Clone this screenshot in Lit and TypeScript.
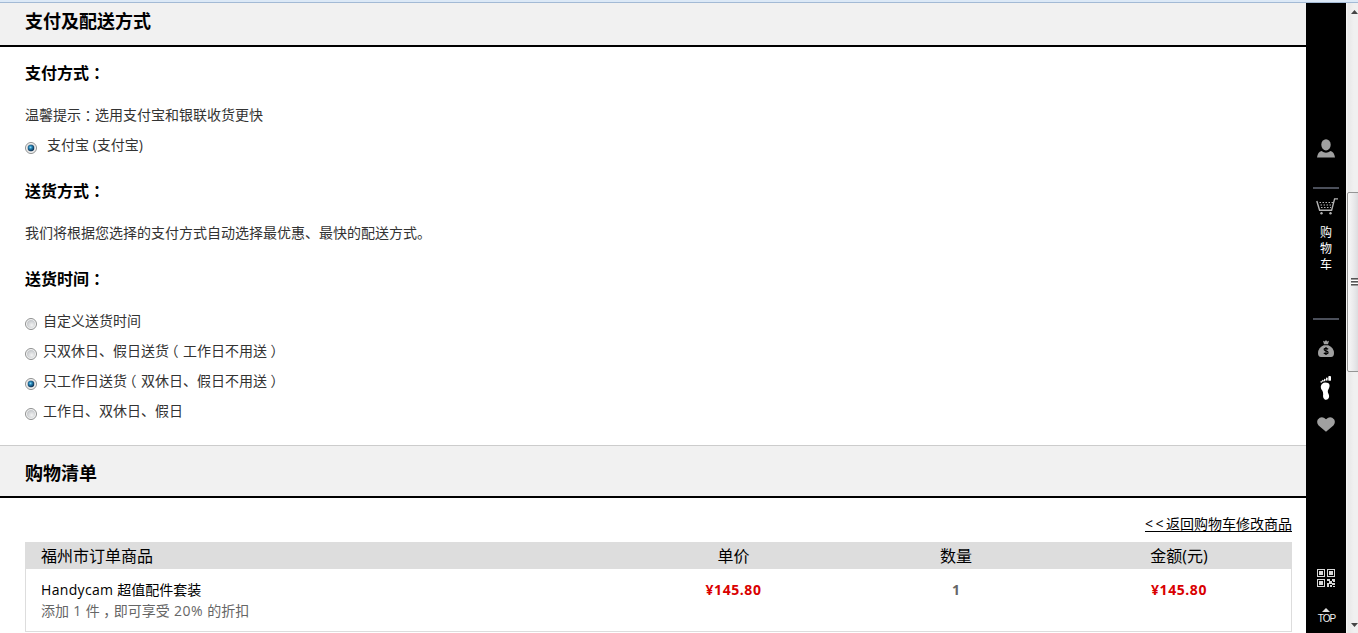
import { LitElement, html, css, svg } from "lit";
import { customElement, property } from "lit/decorators.js";
import { classMap } from "lit/directives/class-map.js";

@customElement("radio-row")
class RadioRow extends LitElement {
  @property() label = "";
  @property({ type: Boolean }) checked = false;
  @property({ type: Boolean }) wide = false;

  static styles = css`
    :host { display: block; }
    .row { display: flex; height: 30px; line-height: 30px; color: #333; font-size: 14px; white-space: nowrap; }
    .dot { width: 12px; height: 12px; margin: 12px 6px 0 0; flex: none; }
    .wide .dot { margin-right: 10px; }
    .paren { display: inline-block; width: 14px; text-align: center; font-feature-settings: "halt"; }
    .open { text-indent: -2px; }
  `;

  render() {
    const parts = this.label.split(/([（）])/);
    return html`<div class=${classMap({ row: true, wide: this.wide })}>
      <svg class="dot" viewBox="0 0 12 12">
        <defs>
          <radialGradient id="g" cx="60%" cy="65%" r="60%">
            <stop offset="0" stop-color="#f3f3f3" /><stop offset="1" stop-color="#c6c9cc" />
          </radialGradient>
          <radialGradient id="b" cx="42%" cy="40%" r="60%">
            <stop offset="0" stop-color="#8fdcf8" /><stop offset=".4" stop-color="#2583b5" /><stop offset="1" stop-color="#0b2b4c" />
          </radialGradient>
        </defs>
        <circle cx="6" cy="6" r="5.5" fill="#f6f6f6" stroke="#8e8f8f" />
        <circle cx="6" cy="6" r="4" fill="url(#g)" />
        ${this.checked ? svg`<circle cx="6" cy="6" r="3.2" fill="url(#b)" />` : ""}
      </svg>
      <span>${parts.map((p) => (p === "（" || p === "）" ? html`<span class=${classMap({ paren: true, open: p === "（" })}>${p}</span>` : p))}</span>
    </div>`;
  }
}

@customElement("side-bar")
class SideBar extends LitElement {
  static styles = css`
    :host { display: flex; flex-direction: column; align-items: center; width: 40px; background: #000; }
    svg { display: block; flex: none; }
    .user { margin-top: 136px; }
    .rule { width: 26px; height: 2px; background: #4b4f5a; }
    .r1 { margin-top: 29px; }
    .cart { margin: 9px 0 0 1px; }
    .label { width: 12px; margin-top: 10px; font-size: 12px; line-height: 16px; color: #fff; word-break: break-all; }
    .r2 { margin-top: 45px; }
    .bag { margin-top: 20px; }
    .foot { margin-top: 19px; }
    .heart { margin-top: 17px; }
    .qr { margin-top: 137px; }
    .arrow { margin-top: 21px; }
    .top { font: 10px/10px "Liberation Sans", sans-serif; color: #f0f0f0; margin: 2px 0 0 1px; letter-spacing: -.9px; }
  `;

  render() {
    return html`
      <svg class="user" width="18" height="19" viewBox="0 0 18 19" fill="#a0a0a0">
        <ellipse cx="9" cy="5.8" rx="4.7" ry="5.6" />
        <path d="M0 18.500 Q.8 12.800 4.500 12 Q9 15.500 13.500 12 Q17.200 12.800 18 18.500Z" />
      </svg>
      <div class="rule r1"></div>
      <svg class="cart" width="22" height="17" viewBox="0 0 22 17" fill="none" stroke="#b4b4b4" stroke-width="1.4">
        <path d="M22 .9H18.600L15.600 12.200H3.600L.8 3" />
        <path d="M3.500 4.500H17M4.500 7H16.500M5 9.500H15" stroke-dasharray="1.500 1.500" stroke-width="1" />
        <circle cx="5.500" cy="15.300" r="1.200" fill="#b4b4b4" stroke="none" />
        <circle cx="14.500" cy="15.300" r="1.200" fill="#b4b4b4" stroke="none" />
      </svg>
      <div class="label">购物车</div>
      <div class="rule r2"></div>
      <svg class="bag" width="16" height="17" viewBox="0 0 16 17">
        <path d="M5 .8L6.800 1.500 8 0 9.200 1.500 11 .8 10 4.200H6Z" fill="#a0a0a0" />
        <path d="M5.600 5.200H10.400Q16 8 16 13Q16 17 13 17H3Q0 17 0 13Q0 8 5.600 5.200Z" fill="#a0a0a0" />
        <path d="M10.200 9.200Q8 7.600 6.300 8.800Q5.800 10.600 8 11Q10.500 11.400 9.900 13.200Q8 14.600 5.800 13M8 7V15" fill="none" stroke="#000" stroke-width="1.200" />
      </svg>
      <svg class="foot" width="12" height="24" viewBox="0 0 12 24" fill="#fff">
        <path d="M.8 10.500Q1.500 6.800 5.300 6.500Q9.800 6.500 9.600 10Q9.200 12.500 8 14.300Q7.400 15.800 8.600 18Q9.600 20.500 8.600 22.300Q7 24.200 5 23.700Q3 23 3 20Q3.500 17 2.400 14.800Q.6 12.500 .8 10.500Z" />
        <rect x="8.300" y="0" width="2.700" height="4.800" rx=".9" />
        <rect x="6" y="1.500" width="1.600" height="3.300" rx=".7" />
        <rect x="4" y="2.700" width="1.400" height="2.600" rx=".6" />
        <rect x="2.200" y="3.700" width="1.300" height="2.200" rx=".6" />
        <rect x=".6" y="4.800" width="1.200" height="2" rx=".6" />
      </svg>
      <svg class="heart" width="18" height="15" viewBox="0 0 18 15" fill="#a0a0a0">
        <path d="M9 14.800L1.600 8.500Q-.8 5.500 .8 2.500Q4.500-2 9 2.200Q13.500-2 17.200 2.500Q18.800 5.500 16.400 8.500Z" />
      </svg>
      <svg class="qr" width="18" height="18" viewBox="0 0 18 18" fill="#d8d8d8" shape-rendering="crispEdges">
        <path fill-rule="evenodd" d="M0 0H8V8H0ZM1 1V7H7V1ZM10 0H18V8H10ZM11 1V7H17V1ZM0 10H8V18H0ZM1 11V17H7V11Z" />
        <path d="M2 2H6V6H2ZM12 2H16V6H12ZM2 12H6V16H2ZM10 10H13V12H10ZM15 10H18V13H16V12H15ZM12 12H15V15H12ZM10 14H12V18H10ZM15 14H18V16H15ZM13 16H15V18H13ZM16 17H18V18H16Z" />
      </svg>
      <svg class="arrow" width="8" height="4" viewBox="0 0 8 4" fill="#e0e0e0"><path d="M4 0L8 4H0Z" /></svg>
      <div class="top">TOP</div>
    `;
  }
}

@customElement("scroll-bar")
class ScrollBar extends LitElement {
  static styles = css`
    :host { display: flex; flex-direction: column; width: 12px; overflow: hidden; background: linear-gradient(90deg, #f8f8f8 0, #e8e8e8 2px, #f0f0f0 8px); }
    svg { display: block; flex: none; margin-left: 5px; }
    .up { margin-top: 7px; }
    .thumb { box-sizing: border-box; width: 16px; height: 180px; flex: none; margin: 178px 0 0 1px; border: 1px solid #959595; border-radius: 2px; background: linear-gradient(90deg, #f7f7f7, #e6e6e8 50%, #cfcfd2); padding: 85px 0 0 3px; }
    .grip { width: 9px; height: 8px; background: repeating-linear-gradient(#555 0 1px, #999 1px 2px, #fff 2px 3px); }
    .down { margin-top: 251px; }
  `;

  render() {
    return html`
      <svg class="up" width="7" height="4" viewBox="0 0 7 4"><path d="M0 4L3.500 0 7 4Z" fill="#444" /></svg>
      <div class="thumb"><div class="grip"></div></div>
      <svg class="down" width="7" height="4" viewBox="0 0 7 4"><path d="M0 0L3.500 4 7 0Z" fill="#444" /></svg>
    `;
  }
}

@customElement("app-root")
class AppRoot extends LitElement {
  static styles = css`
    :host { display: flex; flex-direction: column; height: 633px; overflow: hidden; background: #fff; color: #000; font-family: "Open Sans", "Noto Sans CJK SC", sans-serif; font-size: 14px; }
    .edge { flex: none; height: 2px; background: #dce9f7; border-bottom: 1px solid #a3bad5; }
    .body { display: flex; flex: 1; min-height: 0; }
    main { flex: 1; min-width: 0; }
    h2, h3, p { margin: 0; white-space: nowrap; }
    h2 { box-sizing: border-box; padding-left: 25px; font-size: 18px; background: #f1f1f1; border-bottom: 2px solid #000; }
    .first { height: 44px; line-height: 36px; }
    .second { height: 53px; line-height: 54px; border-top: 1px solid #ccc; }
    .form { padding: 0 25px 19px; }
    h3 { height: 24px; font-size: 16px; line-height: 24px; margin: 19px 0 15px; }
    .form h3:first-child { margin-top: 14px; }
    .mid { display: inline-block; width: 1em; text-align: center; font-feature-settings: "halt"; }
    p { height: 30px; line-height: 30px; color: #333; }
    .back { display: flex; justify-content: flex-end; margin: 16px 14px 0 0; height: 28px; line-height: 20px; }
    .back a { color: #000; text-decoration: underline; text-underline-offset: 2px; }
    .lt { letter-spacing: 2.5px; }
    .table { margin: 0 14px 0 25px; box-sizing: border-box; border: 1px solid #ddd; border-top: 0; height: 90px; }
    .tr { display: grid; grid-template-columns: 596px 223px 222px 224px; text-align: center; }
    .th { margin: 0 -1px; padding: 0 1px; background: #ddd; height: 27px; line-height: 28px; font-size: 16px; }
    .name { text-align: left; padding-left: 15px; }
    .td { padding-top: 10px; line-height: 21px; }
    .latin { letter-spacing: .33px; }
    .note { color: #666; }
    .note .latin { letter-spacing: .5px; }
    .price { color: #d90000; font-weight: 700; letter-spacing: .57px; }
    .qty { color: #666; font-weight: 700; }
  `;

  render() {
    const colon = html`<span class="mid">：</span>`;
    return html`
      <div class="edge"></div>
      <div class="body">
        <main>
          <h2 class="first">支付及配送方式</h2>
          <div class="form">
            <h3>支付方式${colon}</h3>
            <p>温馨提示${colon}选用支付宝和银联收货更快</p>
            <radio-row label="支付宝 (支付宝)" checked wide></radio-row>
            <h3>送货方式${colon}</h3>
            <p>我们将根据您选择的支付方式自动选择最优惠、最快的配送方式。</p>
            <h3>送货时间${colon}</h3>
            <radio-row label="自定义送货时间"></radio-row>
            <radio-row label="只双休日、假日送货（工作日不用送）"></radio-row>
            <radio-row label="只工作日送货（双休日、假日不用送）" checked></radio-row>
            <radio-row label="工作日、双休日、假日"></radio-row>
          </div>
          <h2 class="second">购物清单</h2>
          <div class="back"><a><span class="lt">&lt;&lt;</span>返回购物车修改商品</a></div>
          <div class="table">
            <div class="tr th"><div class="name">福州市订单商品</div><div>单价</div><div>数量</div><div>金额(元)</div></div>
            <div class="tr td">
              <div class="name">
                <div><span class="latin">Handycam </span>超值配件套装</div>
                <div class="note">添加<span class="latin"> 1 </span>件<span class="mid">，</span>即可享受<span class="latin"> 20% </span>的折扣</div>
              </div>
              <div class="price">¥145.80</div><div class="qty">1</div><div class="price">¥145.80</div>
            </div>
          </div>
        </main>
        <side-bar></side-bar>
        <scroll-bar></scroll-bar>
      </div>
    `;
  }
}
